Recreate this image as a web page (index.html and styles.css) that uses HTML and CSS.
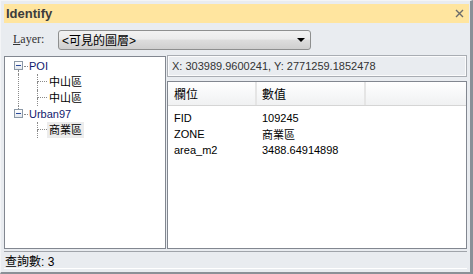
FILE: index.html
```html
<!DOCTYPE html>
<html lang="zh-Hant">
<head>
    <meta charset="UTF-8">
    <title>Identify</title>
    <link rel="stylesheet" href="styles.css">
</head>
<body>
    <div class="window">
        <!-- Title bar -->
        <div class="titlebar">
            <span class="title">Identify</span>
            <svg class="close" width="9" height="9" viewBox="0 0 9 9">
                <path d="M1 1 L8 8 M8 1 L1 8" stroke="#6b6b6b" stroke-width="1.4" fill="none"/>
            </svg>
        </div>

        <!-- Layer selector -->
        <div class="layer-row">
            <span class="layer-label"><u>L</u>ayer:</span>
            <div class="combo">
                <span class="combo-text">&lt;可見的圖層&gt;</span>
                <span class="combo-arrow"></span>
            </div>
        </div>

        <div class="panes">
            <!-- Result tree -->
            <div class="tree-pane">
                <div class="tree-row">
                    <span class="expander">
                        <span class="stub stub-top hidden"></span>
                        <span class="box"><span class="minus"></span></span>
                        <span class="stub stub-bottom"></span>
                    </span>
                    <span class="hline"></span>
                    <span class="node root">POI</span>
                </div>
                <div class="children with-line">
                    <div class="tree-row child">
                        <span class="elbow"><span class="elbow-top"></span><span class="elbow-bottom"></span></span>
                        <span class="node">中山區</span>
                    </div>
                    <div class="tree-row child">
                        <span class="elbow"><span class="elbow-top"></span><span class="elbow-bottom hidden"></span></span>
                        <span class="node">中山區</span>
                    </div>
                </div>
                <div class="tree-row">
                    <span class="expander">
                        <span class="stub stub-top"></span>
                        <span class="box"><span class="minus"></span></span>
                        <span class="stub stub-bottom hidden"></span>
                    </span>
                    <span class="hline"></span>
                    <span class="node root">Urban97</span>
                </div>
                <div class="children">
                    <div class="tree-row child">
                        <span class="elbow"><span class="elbow-top"></span><span class="elbow-bottom hidden"></span></span>
                        <span class="node selected">商業區</span>
                    </div>
                </div>
            </div>

            <!-- Attribute details -->
            <div class="detail-pane">
                <div class="coords">X: 303989.9600241, Y: 2771259.1852478</div>
                <div class="list">
                    <div class="list-head">
                        <span class="col-field">欄位</span>
                        <span class="col-value">數值</span>
                        <span class="col-rest"></span>
                    </div>
                    <div class="list-row"><span class="col-field">FID</span><span class="col-value">109245</span></div>
                    <div class="list-row"><span class="col-field">ZONE</span><span class="col-value">商業區</span></div>
                    <div class="list-row"><span class="col-field">area_m2</span><span class="col-value">3488.64914898</span></div>
                </div>
            </div>
        </div>

        <!-- Status bar -->
        <div class="status">查詢數: 3</div>
    </div>
</body>
</html>
```

FILE: styles.css
```css
/* General Styling */
html, body {
    margin: 0;
    padding: 0;
}

body {
    font-family: 'Liberation Sans', 'Noto Sans CJK TC', sans-serif;
    font-size: 11px;
    color: #000;
    background-color: #e9ecf0;
}

.window {
    width: 473px;
    height: 274px;
    box-sizing: border-box;
    display: flex;
    flex-direction: column;
    background-color: #e9ecf0;
    border-top: 1px solid #f4f5f7;
    border-left: 1px solid #f4f5f7;
    border-right: 3px solid #8b9097;
    border-bottom: 2px solid #8b9097;
    padding: 3px 0 0 3px;
}

/* Title bar */
.titlebar {
    height: 19px;
    display: flex;
    align-items: center;
    justify-content: space-between;
    background-color: #ffe59f;
    padding: 0 5px 0 2px;
    margin-right: 1px;
}

.title {
    font-size: 13px;
    font-weight: bold;
    color: #3c3c3c;
}

.close {
    display: block;
}

/* Layer selector */
.layer-row {
    height: 33px;
    display: flex;
    align-items: center;
}

.layer-label {
    width: 54px;
    padding-left: 9px;
    box-sizing: border-box;
    font-family: 'Liberation Serif', serif;
    font-size: 12px;
    color: #333;
}

.combo {
    width: 253px;
    height: 20px;
    box-sizing: border-box;
    display: flex;
    align-items: center;
    justify-content: space-between;
    border: 1px solid #8e8f8f;
    border-radius: 3px;
    background: linear-gradient(#f2f2f2, #ebebeb 45%, #dddddd 50%, #cfcfcf);
    padding: 0 5px 0 3px;
}

.combo-text {
    font-size: 12px;
}

.combo-arrow {
    width: 0;
    height: 0;
    border-left: 4px solid transparent;
    border-right: 4px solid transparent;
    border-top: 4px solid #000;
}

/* Panes */
.panes {
    flex: 1;
    display: flex;
    gap: 1px;
    margin-right: 3px;
    min-height: 0;
}

.tree-pane {
    width: 162px;
    box-sizing: border-box;
    background-color: #fff;
    border: 1px solid #828790;
    padding: 1px 0 0 9px;
}

.tree-row {
    height: 16px;
    display: flex;
    align-items: center;
}

.expander {
    width: 9px;
    height: 16px;
    display: flex;
    flex-direction: column;
}

.stub {
    margin-left: 4px;
    border-left: 1px dotted #8a8a8a;
}

.stub-top {
    height: 3px;
}

.stub-bottom {
    height: 4px;
}

.hidden {
    border-color: transparent;
}

.box {
    width: 9px;
    height: 9px;
    box-sizing: border-box;
    border: 1px solid #8b98a6;
    background: linear-gradient(#fff, #e4e8ee);
    display: flex;
    align-items: center;
    justify-content: center;
}

.minus {
    width: 5px;
    height: 1px;
    background-color: #2a4a9a;
}

.hline {
    width: 4px;
    margin-left: 1px;
    border-top: 1px dotted #8a8a8a;
}

.node {
    padding: 1px 2px;
    line-height: 14px;
    white-space: nowrap;
}

.root {
    padding-left: 1px;
    color: #10206e;
}

.selected {
    background-color: #ececec;
}

.children {
    margin-left: 4px;
    padding-left: 18px;
    border-left: 1px dotted transparent;
}

.children.with-line {
    border-left-color: #8a8a8a;
}

.elbow {
    width: 10px;
    height: 16px;
    display: flex;
    flex-direction: column;
}

.elbow-top {
    height: 8px;
    border-left: 1px dotted #8a8a8a;
    border-bottom: 1px dotted #8a8a8a;
    box-sizing: border-box;
}

.elbow-bottom {
    height: 8px;
    border-left: 1px dotted #8a8a8a;
}

/* Detail pane */
.detail-pane {
    flex: 1;
    display: flex;
    flex-direction: column;
    gap: 3px;
    margin-top: -1px;
}

.coords {
    height: 22px;
    box-sizing: border-box;
    border: 1px solid #a9adb3;
    box-shadow: inset 0 0 0 1px #fbfbfc;
    padding-left: 4px;
    display: flex;
    align-items: center;
    color: #333;
}

.list {
    flex: 1;
    background-color: #fff;
    border: 1px solid #828790;
    margin-top: 1px;
}

.list-head {
    height: 23px;
    display: flex;
    align-items: center;
    background: linear-gradient(#ffffff, #f7f8f9 50%, #f0f1f2);
    border-bottom: 1px solid #d5d5d5;
    margin-bottom: 4px;
}

.list-head span {
    height: 100%;
    display: flex;
    align-items: center;
    box-sizing: border-box;
    font-size: 12px;
}

.list-head .col-field,
.list-head .col-value {
    border-right: 2px solid #e5e5e5;
}

.col-field {
    width: 89px;
    padding-left: 6px;
    box-sizing: border-box;
}

.col-value {
    width: 109px;
    padding-left: 5px;
    box-sizing: border-box;
}

.list-row {
    height: 16px;
    display: flex;
    align-items: center;
}

/* Status bar */
.status {
    height: 16px;
    margin: 2px 3px 3px 0;
    border-top: 1px solid #a0a4aa;
    border-bottom: 1px solid #ffffff;
    padding-left: 1px;
    display: flex;
    align-items: center;
    font-size: 12px;
}
```
